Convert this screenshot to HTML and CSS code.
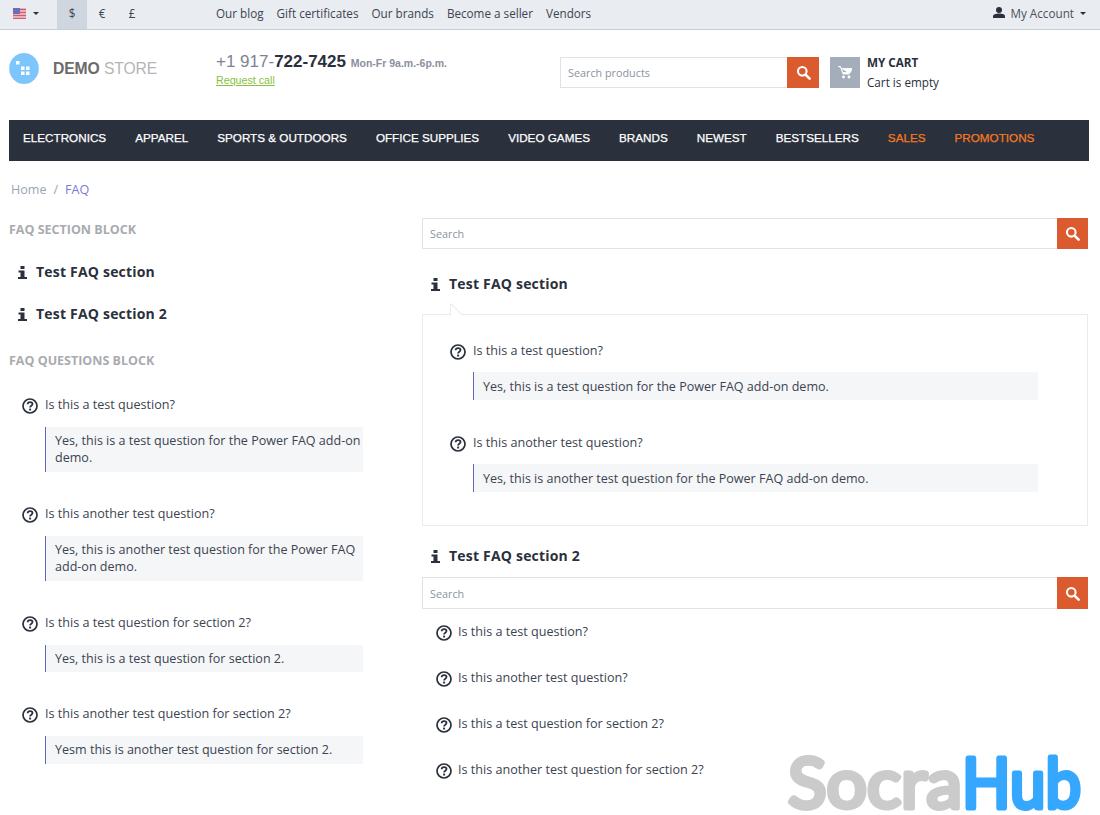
FILE: index.html
```html
<!DOCTYPE html>
<html lang="en">
<head>
<meta charset="utf-8">
<title>FAQ</title>
<link rel="stylesheet" href="styles.css">
</head>
<body>
<svg class="defs" width="0" height="0" aria-hidden="true">
  <symbol id="i-search" viewBox="0 0 16 16"><circle cx="6.7" cy="6.7" r="4.6" fill="none" stroke="#fff" stroke-width="2.2"/><path d="M10.2 10.2l4.3 4.3" stroke="#fff" stroke-width="2.8" stroke-linecap="round"/></symbol>
  <symbol id="i-info" viewBox="0 0 9 13"><path d="M2.500 0h4v3h-4zM.5 4.500h6V11H9v2H0v-2h2.500V6.500h-2z" fill="#2a303c"/></symbol>
  <symbol id="i-q" viewBox="0 0 16 16"><circle cx="8" cy="8" r="7" fill="none" stroke="#2a303c" stroke-width="1.7"/><path d="M5.600 6.200c.1-1.400 1.100-2.100 2.500-2.100 1.300 0 2.400.8 2.400 1.900 0 1.700-2.400 1.700-2.400 3.400" fill="none" stroke="#2a303c" stroke-width="1.8"/><path d="M7.100 10.600h2v1.900h-2z" fill="#2a303c"/></symbol>
</svg>

<header class="topbar">
  <div class="lang">
    <svg class="flag" width="13" height="11" viewBox="0 0 13 11"><rect width="13" height="11" fill="#eab0b6"/><path d="M0 1.500h13M0 4.500h13M0 7.500h13M0 10.500h13" stroke="#c9606f" stroke-width="1"/><rect width="7" height="6" fill="#6a6fb8"/></svg>
    <span class="caret"></span>
  </div>
  <div class="currency">
    <span class="cur active">$</span><span class="cur">€</span><span class="cur">£</span>
  </div>
  <nav class="toplinks">
    <a>Our blog</a><a>Gift certificates</a><a>Our brands</a><a>Become a seller</a><a>Vendors</a>
  </nav>
  <div class="account">
    <svg width="12" height="11" viewBox="0 0 12 11"><circle cx="6" cy="3" r="3" fill="#2a303c"/><path d="M0 11V9.200C0 7.600 2.500 6.600 6 6.600s6 1 6 2.600V11z" fill="#2a303c"/></svg>
    <span>My Account</span><span class="caret"></span>
  </div>
</header>

<div class="page">
  <div class="head">
    <div class="logo">
      <svg width="30" height="31" viewBox="0 0 30 31"><ellipse cx="15" cy="15.500" rx="14.800" ry="15.500" fill="#7cc6fd"/><path d="M7 8h3.500v3.500H7zM12 13.500h3.500V17H12zM17 13.500h3.500V17H17zM12 18.500h3.500V22H12zM17 18.500h3.500V22H17z" fill="#fff"/></svg>
      <span class="logotext"><b>DEMO</b> STORE</span>
    </div>
    <div class="phone">
      <div class="phoneline"><span class="ph1">+1 917-</span><b class="ph2">722-7425</b> <span class="ph3">Mon-Fr 9a.m.-6p.m.</span></div>
      <a class="call">Request call</a>
    </div>
    <div class="hsearch">
      <div class="field">Search products</div>
      <div class="sbtn"><svg width="15" height="15"><use href="#i-search"/></svg></div>
    </div>
    <div class="cart">
      <div class="carticon"><svg width="14" height="13" viewBox="0 0 14 13"><path d="M0 .5h2.500L5 8h7M3.500 2.500H14L12.500 6.500H4.500z" fill="#fff" stroke="#fff" stroke-width=".8"/><circle cx="5.500" cy="11" r="1.400" fill="#fff"/><circle cx="11" cy="11" r="1.400" fill="#fff"/></svg></div>
      <div class="carttext"><div class="carttitle">MY CART</div><div class="cartempty">Cart is empty</div></div>
    </div>
  </div>

  <nav class="mainnav">
    <a>ELECTRONICS</a><a>APPAREL</a><a>SPORTS &amp; OUTDOORS</a><a>OFFICE SUPPLIES</a><a>VIDEO GAMES</a><a>BRANDS</a><a>NEWEST</a><a>BESTSELLERS</a><a class="hot">SALES</a><a class="hot">PROMOTIONS</a>
  </nav>

  <div class="crumbs"><a>Home</a><span class="sep">/</span><span class="cur-crumb">FAQ</span></div>

  <main class="cols">
    <aside class="left">
      <h2 class="blocktitle">FAQ SECTION BLOCK</h2>
      <div class="lsections">
        <div class="sec"><svg width="9" height="13"><use href="#i-info"/></svg><span>Test FAQ section</span></div>
        <div class="sec"><svg width="9" height="13"><use href="#i-info"/></svg><span>Test FAQ section 2</span></div>
      </div>
      <h2 class="blocktitle second">FAQ QUESTIONS BLOCK</h2>
      <div class="lqs">
        <div class="qa"><div class="q"><svg width="16" height="16"><use href="#i-q"/></svg><span>Is this a test question?</span></div><div class="a">Yes, this is a test question for the Power FAQ add-on demo.</div></div>
        <div class="qa"><div class="q"><svg width="16" height="16"><use href="#i-q"/></svg><span>Is this another test question?</span></div><div class="a">Yes, this is another test question for the Power FAQ add-on demo.</div></div>
        <div class="qa"><div class="q"><svg width="16" height="16"><use href="#i-q"/></svg><span>Is this a test question for section 2?</span></div><div class="a">Yes, this is a test question for section 2.</div></div>
        <div class="qa"><div class="q"><svg width="16" height="16"><use href="#i-q"/></svg><span>Is this another test question for section 2?</span></div><div class="a">Yesm this is another test question for section 2.</div></div>
      </div>
    </aside>

    <section class="right">
      <div class="rsearch">
        <div class="field">Search</div>
        <div class="sbtn"><svg width="15" height="15"><use href="#i-search"/></svg></div>
      </div>
      <div class="sec rhead"><svg width="9" height="13"><use href="#i-info"/></svg><span>Test FAQ section</span></div>
      <div class="box">
        <span class="notch"></span>
        <div class="qa"><div class="q"><svg width="16" height="16"><use href="#i-q"/></svg><span>Is this a test question?</span></div><div class="a">Yes, this is a test question for the Power FAQ add-on demo.</div></div>
        <div class="qa"><div class="q"><svg width="16" height="16"><use href="#i-q"/></svg><span>Is this another test question?</span></div><div class="a">Yes, this is another test question for the Power FAQ add-on demo.</div></div>
      </div>
      <div class="sec rhead2"><svg width="9" height="13"><use href="#i-info"/></svg><span>Test FAQ section 2</span></div>
      <div class="rsearch tall">
        <div class="field">Search</div>
        <div class="sbtn"><svg width="15" height="15"><use href="#i-search"/></svg></div>
      </div>
      <div class="qlist">
        <div class="q"><svg width="16" height="16"><use href="#i-q"/></svg><span>Is this a test question?</span></div>
        <div class="q"><svg width="16" height="16"><use href="#i-q"/></svg><span>Is this another test question?</span></div>
        <div class="q"><svg width="16" height="16"><use href="#i-q"/></svg><span>Is this a test question for section 2?</span></div>
        <div class="q"><svg width="16" height="16"><use href="#i-q"/></svg><span>Is this another test question for section 2?</span></div>
      </div>
    </section>
  </main>
</div>

<svg class="watermark" width="300" height="65" viewBox="0 0 300 65">
  <text class="wm-a" x="2" y="58" textLength="174" lengthAdjust="spacingAndGlyphs">Socra</text>
  <text class="wm-b" x="176" y="58" textLength="119" lengthAdjust="spacingAndGlyphs">Hub</text>
</svg>
</body>
</html>
```
FILE: styles.css
```css
* { box-sizing: border-box; }
html, body { margin: 0; padding: 0; }
body {
  height: 815px;
  overflow: hidden;
  position: relative;
  background: #fff;
  color: #2a303c;
  font-family: "Open Sans", sans-serif;
  font-size: 12.55px;
  line-height: 17.5px;
}
.defs { position: absolute; }

.topbar {
  height: 30px;
  background: #e9edf1;
  border-bottom: 1px solid #c5cdd9;
  display: flex;
  align-items: center;
  padding: 0 12px 0 13px;
  font-size: 11.7px;
}
.lang { display: flex; align-items: center; gap: 7px; width: 44px; height: 29px; padding-bottom: 3px; }
.caret { width: 0; height: 0; border: 3px solid transparent; border-top-color: #2a303c; border-bottom: 0; display: inline-block; }
.currency { display: flex; height: 29px; }
.cur { width: 30px; padding-bottom: 2px; display: flex; align-items: center; justify-content: center; color: #3c4350; }
.cur.active { background: #cfd6e0; }
.toplinks { display: flex; gap: 13px; margin-left: 69px; margin-top: -2px; color: #3c4350; }
.account { margin-left: auto; margin-top: -2px; display: flex; align-items: center; gap: 5px; color: #4a5160; padding-right: 2px; }
.account svg { margin-top: -2px; }
.account .caret { margin-left: 1px; }

.page { padding: 0 11px 0 9px; }
.head { height: 90px; display: flex; align-items: flex-start; }
.logo { display: flex; align-items: center; width: 207px; padding-top: 23px; gap: 14px; }
.logotext { font-family: "Liberation Sans", sans-serif; font-size: 15.7px; line-height: 31px; color: #b5b5b5; letter-spacing: -0.1px; }
.logotext b { color: #6b6b6b; }
.phone { font-family: "Liberation Sans", sans-serif; width: 344px; padding-top: 21px; }
.phoneline { line-height: 21px; color: #7d8494; font-size: 17px; white-space: nowrap; }
.ph2 { color: #2a303c; }
.ph3 { font-size: 10.5px; font-weight: bold; color: #8b8f9b; }
.call { display: block; font-size: 10.7px; line-height: 15px; margin-top: -1px; color: #88c13e; text-decoration: underline; }
.hsearch { display: flex; width: 259px; height: 31px; margin-top: 27px; }
.field {
  flex: 1;
  border: 1px solid #dfe3e8;
  border-right: 0;
  padding-left: 7px;
  display: flex;
  align-items: center;
  font-size: 10.8px;
  color: #8b93a1;
}
.sbtn { width: 31px; background: #dc5b2e; display: flex; align-items: center; justify-content: center; }
.hsearch .sbtn { width: 32px; }
.cart { display: flex; margin-left: 11px; margin-top: 27px; gap: 7px; font-size: 11.7px; }
.carticon { width: 30px; height: 31px; background: #a4aebb; display: flex; align-items: center; justify-content: center; }
.carttext { line-height: 21px; margin-top: -5px; }
.carttitle { font-weight: 700; }
.cartempty { margin-top: -1px; }

.mainnav {
  height: 41px;
  background: #2a303c;
  display: flex;
  align-items: center;
  padding: 0 0 6px 14px;
  gap: 29px;
  font-family: "Liberation Sans", sans-serif;
  font-size: 11.7px;
  line-height: 17px;
  color: #fff;
  -webkit-text-stroke: 0.25px currentColor;
}
.mainnav .hot { color: #f47a20; }

.crumbs { padding: 20px 0 0 2px; line-height: 17px; color: #9aa3b8; }
.sep { margin: 0 7px; }
.cur-crumb { color: #7c7bd6; }

.cols { display: grid; grid-template-columns: 354px 666px; column-gap: 59px; margin-top: 20px; }
.blocktitle { margin: 0; font-size: 12.5px; font-weight: 700; line-height: 20px; color: #a9abb0; padding-top: 2px; height: 22px; }
.blocktitle.second { margin-top: 25px; }
.lsections { padding-left: 9px; display: flex; flex-direction: column; gap: 22px; margin-top: 22px; }
.sec { display: flex; align-items: center; gap: 9px; height: 20px; font-size: 14px; font-weight: 700; letter-spacing: 0.2px; }
.lqs { padding-left: 13px; margin-top: 23.6px; width: 354px; }
.qa + .qa { margin-top: 32px; }
.q { display: flex; align-items: center; height: 20px; gap: 7px; color: #3c4350; font-size: 12.6px; }
.q svg { margin-top: 2px; }
.a {
  margin: 12px 0 0 23px;
  padding: 5px 0 5px 9px;
  border-left: 1px solid #6468b8;
  background: #f5f6f8;
  color: #3c4350;
}

.rsearch { display: flex; height: 31px; }
.rsearch.tall { height: 32px; margin-top: 11px; }
.rsearch.tall .field { padding-top: 1px; }
.rhead { margin-top: 25px; padding-left: 9px; }
.box { position: relative; margin-top: 20px; height: 212px; border: 1px solid #e9ebef; padding: 26px 49px 0 27px; }
.box .a { margin-top: 11px; padding: 5.5px 0 4.5px 9px; }
.notch { position: absolute; left: 27px; top: -11px; width: 12px; height: 12px; background: #fff; border-left: 1px solid #e9ebef; }
.notch::after { content: ""; position: absolute; left: 0; top: -1px; width: 17px; height: 1px; background: #e9ebef; transform: rotate(45deg); transform-origin: 0 0; }
.box .qa + .qa { margin-top: 33.5px; }
.rhead2 { margin-top: 20px; padding-left: 9px; }
.qlist { padding: 13px 0 0 14px; display: flex; flex-direction: column; gap: 26px; }
.qlist .q { gap: 6px; }

.watermark { position: absolute; left: 786px; top: 750px; }
.watermark text {
  font-family: "Lato", sans-serif;
  font-weight: 400;
  font-size: 70px;
  stroke-width: 5px;
  stroke-linejoin: round;
}
.wm-a { fill: #cbcbcb; stroke: #cbcbcb; }
.wm-b { fill: #35a7ff; stroke: #35a7ff; }
```
